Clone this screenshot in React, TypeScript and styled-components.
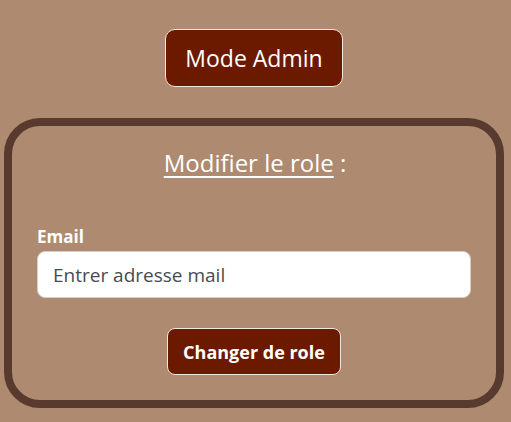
import React from "react";
import styled, { createGlobalStyle } from "styled-components";

const Global = createGlobalStyle`
  html, body { margin: 0; padding: 0; background: #ae8a70; }
  body { font-family: "Open Sans", "DejaVu Sans", sans-serif; }
  * { box-sizing: border-box; }
`;

const Page = styled.div`
  display: flex;
  flex-direction: column;
  align-items: center;
  padding-top: 29px;
  width: 511px;
`;

const AdminButton = styled.button`
  height: 58px;
  width: 178px;
  background: #6b1a00;
  color: #fff;
  border: 1px solid #f3e6dc;
  border-radius: 10px;
  font-family: inherit;
  font-size: 23px;
  margin-right: 3px;
`;

const Card = styled.section`
  margin-top: 31px;
  width: 500px;
  height: 290px;
  border: 8px solid #583a2e;
  border-radius: 36px;
  display: flex;
  flex-direction: column;
  align-items: center;
  padding: 20px 25px 0;
  margin-left: -3px;
`;

const Title = styled.h2`
  margin: 0;
  font-size: 24px;
  font-weight: 400;
  color: #fff;
  line-height: 34px;
  margin-left: 2px;
`;

const Under = styled.span`
  text-decoration: underline;
  text-underline-offset: 4px;
  text-decoration-thickness: 2px;
`;

const Field = styled.div`
  align-self: stretch;
  display: flex;
  flex-direction: column;
  margin-top: 47px;
`;

const Label = styled.label`
  color: #fff;
  font-weight: 700;
  font-size: 17px;
  line-height: 20px;
  margin-bottom: 4px;
`;

const Input = styled.input`
  height: 47px;
  width: 434px;
  background: #fff;
  border: 1px solid #d8ccc4;
  border-radius: 8px;
  padding: 0 15px;
  font-family: inherit;
  font-size: 19px;
  color: #333;
  &::placeholder { color: #464b52; }
`;

const SubmitButton = styled.button`
  margin-top: 30px;
  height: 47px;
  width: 174px;
  background: #6b1a00;
  color: #fff;
  border: 1px solid #f3e6dc;
  border-radius: 8px;
  font-family: inherit;
  font-weight: 700;
  font-size: 18px;
`;

export default function App() {
  return (
    <>
      <Global />
      <Page>
        <AdminButton>Mode Admin</AdminButton>
        <Card>
          <Title>
            <Under>Modifier le role</Under> :
          </Title>
          <Field>
            <Label htmlFor="email">Email</Label>
            <Input id="email" type="email" placeholder="Entrer adresse mail" />
          </Field>
          <SubmitButton>Changer de role</SubmitButton>
        </Card>
      </Page>
    </>
  );
}
